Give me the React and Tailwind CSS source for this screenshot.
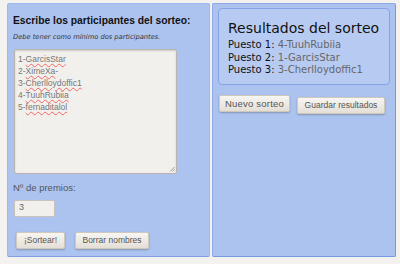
export default function App() {
  const names = ['GarcisStar', 'XimeXa', 'Cherlloydoffic1', 'TuuhRubiia', 'fernaditalol'];
  const results = [
    ['Puesto 1:', '4-TuuhRubiia'],
    ['Puesto 2:', '1-GarcisStar'],
    ['Puesto 3:', '3-Cherlloydoffic1'],
  ];
  const btn =
    'h-[17px] rounded-[2px] border border-[#cfc8bd] bg-gradient-to-b from-[#f8f6f3] to-[#e4ded6] text-[#555] shadow-[0_1px_2px_rgba(0,0,0,0.25)] leading-none whitespace-nowrap flex items-center justify-center';

  return (
    <div className="w-[400px] h-[264px] bg-[#f4f2ef] pt-[3px] pl-[7px] flex gap-[2px] font-['DejaVu_Sans',sans-serif]">
      {/* participantes */}
      <div className="w-[203px] h-[254px] bg-[#adc3ef] rounded-[2px] border border-[#9fb7ec] border-b-[#7f9ee6] pl-[5px] pt-[12px]">
        <h2 className="text-[10.3px] font-bold text-[#111] leading-none font-['Liberation_Sans',sans-serif] whitespace-nowrap">
          Escribe los participantes del sorteo:
        </h2>
        <p className="mt-[8px] text-[6.7px] italic text-[#333] leading-none whitespace-nowrap">
          Debe tener como mínimo dos participantes.
        </p>
        <div className="relative mt-[8px] ml-[1px] w-[163px] h-[125px] bg-[#f2f0ed] border border-[#b9b4ad] rounded-[2px] shadow-[inset_0_1px_2px_rgba(0,0,0,0.15)] px-[3px] pt-[3px] font-['Liberation_Sans',sans-serif] text-[8.5px] text-[#777] leading-[12px]">
          {names.map((n, i) => (
            <div key={n}>
              {i + 1}-<span className="underline decoration-wavy decoration-[#e66] decoration-1 underline-offset-1">{n}</span>
              {n === 'XimeXa' ? '-' : ''}
            </div>
          ))}
          <svg className="absolute right-[1px] bottom-[1px]" width="6" height="6" viewBox="0 0 6 6">
            <path d="M1 5.5L5.5 1M3.5 5.5L5.5 3.5" stroke="#888" strokeWidth="0.8" />
          </svg>
        </div>
        <p className="mt-[9px] text-[9.5px] text-[#555] leading-none font-['Liberation_Sans',sans-serif]">Nº de premios:</p>
        <div className="mt-[7px] ml-[1px] w-[41px] h-[17px] bg-[#f2f0ed] border border-[#c9c3bb] rounded-[2px] px-[4px] flex items-center font-['Liberation_Sans',sans-serif] text-[9px] text-[#666]">
          3
        </div>
        <div className="mt-[15px] ml-[3px] flex gap-[10px] font-['Liberation_Sans',sans-serif] text-[8.5px]">
          <button className={btn + ' w-[49px]'}>¡Sortear!</button>
          <button className={btn + ' w-[74px]'}>Borrar nombres</button>
        </div>
      </div>

      {/* resultados */}
      <div className="w-[184px] h-[254px] bg-[#adc3ef] rounded-[2px] border border-[#8eaae9] border-r-[#7797e3] border-b-[#7797e3] pl-[5px] pt-[4px]">
        <div className="w-[172px] h-[77px] bg-[#b7cbf2] border border-[#86a3e6] rounded-[4px] pl-[9px] pt-[12px]">
          <h3 className="text-[14px] text-[#111] leading-none">Resultados del sorteo</h3>
          <div className="mt-[4px] text-[10px] leading-[12.5px] whitespace-nowrap">
            {results.map(([p, n]) => (
              <div key={p}>
                <span className="text-[#111]">{p}</span> <span className="text-[#666]">{n}</span>
              </div>
            ))}
          </div>
        </div>
        <div className="mt-[10px] ml-[1px] flex items-start gap-[7px] font-['Liberation_Sans',sans-serif]">
          <button className={btn + ' w-[71px] text-[9.5px] tracking-[0.2px]'}>Nuevo sorteo</button>
          <button className={btn + ' w-[88px] mt-[2px] text-[8.5px]'}>Guardar resultados</button>
        </div>
      </div>
    </div>
  );
}
